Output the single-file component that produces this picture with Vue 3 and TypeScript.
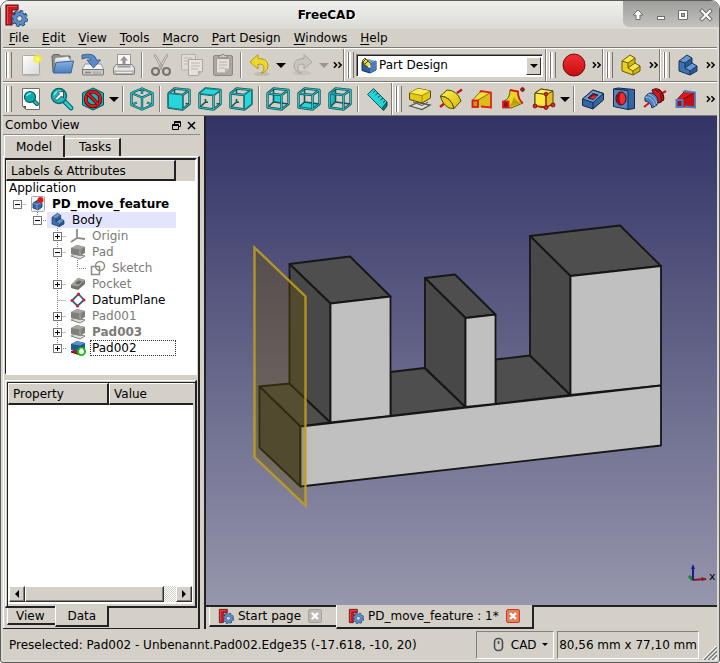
<script setup lang="ts">
import { ref } from 'vue'

interface Tool {
  icon?: string
  label?: string
  menu?: boolean
  disabled?: boolean
  sep?: boolean
}
interface TreeRow {
  label: string
  icon: string
  cells: string[]
  tone?: string
  expander?: string
}

const menus = ['File', 'Edit', 'View', 'Tools', 'Macro', 'Part Design', 'Windows', 'Help']
const windowButtons = ['shade', 'minimize', 'maximize', 'close']

const fileTools: Tool[] = [
  { icon: 'new', label: 'New' },
  { icon: 'open', label: 'Open' },
  { icon: 'save', label: 'Save' },
  { icon: 'print', label: 'Print' },
  { sep: true },
  { icon: 'cut', label: 'Cut', disabled: true },
  { icon: 'copy', label: 'Copy', disabled: true },
  { icon: 'paste', label: 'Paste', disabled: true },
  { sep: true },
  { icon: 'undo', label: 'Undo', menu: true },
  { icon: 'redo', label: 'Redo', menu: true, disabled: true },
]

const sideGroups: Tool[] = [
  { icon: 'record', label: 'Record macro' },
  { icon: 'part', label: 'Create part' },
  { icon: 'body', label: 'Create body' },
]

const viewTools: Tool[] = [
  { icon: 'fit', label: 'Fit all' },
  { icon: 'fitsel', label: 'Fit selection' },
  { icon: 'style', label: 'Draw style', menu: true },
  { sep: true },
  { icon: 'axo', label: 'Axonometric' },
  { sep: true },
  { icon: 'front', label: 'Front' },
  { icon: 'top', label: 'Top' },
  { icon: 'right', label: 'Right' },
  { sep: true },
  { icon: 'rear', label: 'Rear' },
  { icon: 'bottom', label: 'Bottom' },
  { icon: 'left', label: 'Left' },
  { sep: true },
  { icon: 'measure', label: 'Measure distance' },
]

const featureTools: Tool[] = [
  { icon: 'pad', label: 'Pad' },
  { icon: 'revolve', label: 'Revolution' },
  { icon: 'loft', label: 'Additive loft' },
  { icon: 'pipe', label: 'Additive pipe' },
  { icon: 'box', label: 'Additive box', menu: true },
  { sep: true },
  { icon: 'pocket', label: 'Pocket' },
  { icon: 'hole', label: 'Hole' },
  { icon: 'groove', label: 'Groove' },
  { icon: 'subloft', label: 'Subtractive loft' },
]

const tree: TreeRow[] = [
  { label: 'PD_move_feature', icon: 'doc', cells: ['root'], expander: '-', tone: 'strong' },
  { label: 'Body', icon: 'body', cells: ['none', 'last'], expander: '-', tone: 'marked' },
  { label: 'Origin', icon: 'origin', cells: ['none', 'none', 'mid'], expander: '+', tone: 'dim' },
  { label: 'Pad', icon: 'padgrey', cells: ['none', 'none', 'mid'], expander: '-', tone: 'dim' },
  { label: 'Sketch', icon: 'sketch', cells: ['none', 'none', 'pass', 'last'], tone: 'dim' },
  { label: 'Pocket', icon: 'pocketgrey', cells: ['none', 'none', 'mid'], expander: '+', tone: 'dim' },
  { label: 'DatumPlane', icon: 'datum', cells: ['none', 'none', 'mid'] },
  { label: 'Pad001', icon: 'padgrey', cells: ['none', 'none', 'mid'], expander: '+', tone: 'dim' },
  { label: 'Pad003', icon: 'padgrey', cells: ['none', 'none', 'mid'], expander: '+', tone: 'dim strong' },
  { label: 'Pad002', icon: 'padtip', cells: ['none', 'none', 'last'], expander: '+', tone: 'focused' },
]

const branch: Record<string, string> = {
  none: '',
  root: 'M10.5 8.5H19',
  last: 'M10.5 0V8.5H19',
  mid: 'M10.5 0V16M10.5 8.5H19',
  pass: 'M10.5 0V16',
}

const workbench = ref('Part Design')
const comboTab = ref('Model')
const propertyTab = ref('Data')
</script>

<template>
  <svg class="defs" aria-hidden="true">
    <defs>
      <linearGradient id="paper" x1="0" y1="0" x2="1" y2="1">
        <stop offset="0" stop-color="#ffffff" /><stop offset="1" stop-color="#d8d8dc" />
      </linearGradient>
      <linearGradient id="bluefold" x1="0" y1="0" x2="0" y2="1">
        <stop offset="0" stop-color="#8ab0de" /><stop offset="1" stop-color="#4a7fc0" />
      </linearGradient>
      <linearGradient id="gold" x1="0" y1="0" x2="1" y2="1">
        <stop offset="0" stop-color="#fdf25a" /><stop offset="1" stop-color="#d9b800" />
      </linearGradient>
      <linearGradient id="cyan" x1="0" y1="0" x2="1" y2="1">
        <stop offset="0" stop-color="#34e2e2" /><stop offset="1" stop-color="#06989a" />
      </linearGradient>
      <linearGradient id="redg" x1="0" y1="0" x2="0" y2="1">
        <stop offset="0" stop-color="#f03035" /><stop offset="1" stop-color="#c80c10" />
      </linearGradient>
      <radialGradient id="glow">
        <stop offset="0" stop-color="#ffffc0" /><stop offset="0.45" stop-color="#f8ee30" /><stop offset="1" stop-color="#f8ee30" stop-opacity="0" />
      </radialGradient>
    </defs>

    <symbol id="logo" viewBox="0 0 24 24">
      <path d="M2 2H14V7H8V10H12V14H8V22H2Z" fill="#cf1a1e" stroke="#641014" stroke-width="1.2" />
      <path d="M3 3H13V4H4V21H3Z" fill="#f4484a" />
      <circle cx="15.500" cy="15.500" r="6.800" fill="none" stroke="#25405f" stroke-width="3.400" stroke-dasharray="3.200 2.140" />
      <circle cx="15.500" cy="15.500" r="4.500" fill="none" stroke="#25405f" stroke-width="5" />
      <circle cx="15.500" cy="15.500" r="6.500" fill="none" stroke="#5c8cc8" stroke-width="2.400" stroke-dasharray="2.400 2.705" stroke-dashoffset="-.3" />
      <circle cx="15.500" cy="15.500" r="4.500" fill="none" stroke="#5c8cc8" stroke-width="3.200" />
      <circle cx="15.500" cy="15.500" r="2.300" fill="#dcdad5" />
    </symbol>

    <symbol id="new" viewBox="0 0 24 24">
      <ellipse cx="12" cy="22" rx="10" ry="1.500" fill="#a8a49c" opacity=".6" />
      <rect x="3.500" y="2.500" width="17" height="19" rx="1" fill="url(#paper)" stroke="#aaa" />
      <circle cx="18.500" cy="6" r="5.500" fill="url(#glow)" />
    </symbol>
    <symbol id="open" viewBox="0 0 24 24">
      <path d="M2 3L4 1.500H9L10 3H20V19H3Z" fill="#8d8f8b" stroke="#5f615d" />
      <path d="M5 5L18 3.500L21 8H5Z" fill="#f4f4f4" stroke="#999" stroke-width=".7" />
      <path d="M5 6.500H20V10H5Z" fill="#dcdcdc" />
      <path d="M6 9.500L23.500 8L21 20H3.500Z" fill="url(#bluefold)" stroke="#3565a4" />
    </symbol>
    <symbol id="save" viewBox="0 0 24 24">
      <path d="M4 11H20L23 17H1Z" fill="#f2f2f0" stroke="#888" stroke-width=".8" />
      <path d="M1.500 16.500H22.500V21Q22.500 22 21.500 22H2.500Q1.500 22 1.500 21Z" fill="#c9c9c7" stroke="#777" />
      <path d="M4 19.500H10" stroke="#888" stroke-width="1.500" />
      <path d="M13 18.500V21M15 18.500V21M17 18.500V21M19 18.500V21" stroke="#999" />
      <path d="M1 2Q14 -1 15.500 7H19.500L12.500 15L6 7H10Q9 3 1 6Z" fill="#5b8bc4" stroke="#2f5b94" stroke-width=".9" />
    </symbol>
    <symbol id="print" viewBox="0 0 24 24">
      <path d="M5.500 1.500H18.500V14H5.500Z" fill="#f6f6f6" stroke="#999" />
      <path d="M12 3L16 7.500H13.500V11H10.500V7.500H8Z" fill="#949494" />
      <path d="M4 11.500H20L22.500 15V20.500Q22.500 21.500 21.500 21.500H2.500Q1.500 21.500 1.500 20.500V15Z" fill="#e6e6e4" stroke="#808080" />
      <path d="M5.500 12.500H18.500V14.500H5.500Z" fill="#9a9a98" />
      <path d="M2 17.500H22V21H2Z" fill="#b4b4b2" /><path d="M4 19.500H20" stroke="#ececea" />
    </symbol>
    <symbol id="cut" viewBox="0 0 24 24">
      <path d="M5 2L6.500 1.500L15 16L13 17ZM19 2L17.500 1.500L9 16L11 17Z" fill="#ddd9d2" stroke="#9a968e" stroke-width=".9" />
      <circle cx="6.500" cy="18.500" r="3.500" fill="none" stroke="#77736d" stroke-width="2.200" />
      <circle cx="17.500" cy="18.500" r="3.500" fill="none" stroke="#77736d" stroke-width="2.200" />
    </symbol>
    <symbol id="copy" viewBox="0 0 24 24">
      <path d="M1.500 1.500H15.500V17H1.500Z" fill="#dfdbd4" stroke="#b6b2aa" />
      <path d="M4 5H12M4 8H12M4 11H8" stroke="#bcb8b0" />
      <path d="M8.500 6.500H22.500V18L18 22.500H8.500Z" fill="#e6e2db" stroke="#aaa69e" />
      <path d="M11 10H20M11 13H20M11 16H18" stroke="#bcb8b0" /><path d="M18 22V18H22Z" fill="#b4b0a8" />
    </symbol>
    <symbol id="paste" viewBox="0 0 24 24">
      <rect x="2.500" y="2.500" width="19" height="20" rx="1.500" fill="#aca89f" stroke="#8e8a82" />
      <path d="M5.500 5.500H18.500V16L15 20H5.500Z" fill="#e4e0d9" stroke="#a29e96" />
      <path d="M8 9H16M8 12H16M8 15H14" stroke="#b8b4ac" /><path d="M14 20V15.500H19Z" fill="#b8b4ac" />
      <path d="M8 5V2.500H10Q12 -.5 14 2.500H16V5Z" fill="#cbc7bf" stroke="#89857d" />
    </symbol>
    <symbol id="undo" viewBox="0 0 24 24">
      <ellipse cx="14" cy="21" rx="8" ry="2" fill="#aaa598" opacity=".5" />
      <path d="M10 1.500L2 9L10 16V11.500Q16 10 16 15Q16 18 13 20.500Q20 18.500 20 12.500Q20 5.500 10 5.500Z" fill="#edd62d" stroke="#b99a0c" />
    </symbol>
    <symbol id="redo" viewBox="0 0 24 24">
      <ellipse cx="11" cy="20" rx="9" ry="2.500" fill="#bdb9b1" opacity=".6" />
      <path d="M13 1.500L21 9L13 16V11.500Q7 10 6.500 15Q7 18 10 20.500Q3 18.500 3 12.500Q3 5.500 13 5.500Z" fill="#c8c5be" stroke="#aaa79f" />
    </symbol>
    <symbol id="record" viewBox="0 0 24 24">
      <circle cx="12" cy="12" r="11" fill="url(#redg)" stroke="#6c1012" />
    </symbol>

    <symbol id="part" viewBox="0 0 24 24">
      <path d="M3 8L9 10V15L14 18V22L3 18Z" fill="#e8d022" />
      <path d="M9 10L16 5V10L9 15ZM14 18L21 13V18L14 22Z" fill="#d3b90f" />
      <path d="M3 8L11 2L16 5L9 10ZM9 15L16 10L21 13L14 18Z" fill="#f9ea4c" />
      <path d="M3 8L11 2L16 5V10L21 13V18L14 22L3 18ZM3 8L9 10L16 5M9 10V15L14 18V22M9 15L16 10M14 18L21 13" fill="none" stroke="#685806" stroke-linejoin="round" />
    </symbol>
    <symbol id="body" viewBox="0 0 24 24">
      <path d="M3 8L9 10V15L14 18V22L3 18Z" fill="#3d72b4" />
      <path d="M9 10L16 5V10L9 15ZM14 18L21 13V18L14 22Z" fill="#2c5a98" />
      <path d="M3 8L11 2L16 5L9 10ZM9 15L16 10L21 13L14 18Z" fill="#6898d0" />
      <path d="M3 8L11 2L16 5V10L21 13V18L14 22L3 18ZM3 8L9 10L16 5M9 10V15L14 18V22M9 15L16 10M14 18L21 13" fill="none" stroke="#163257" stroke-linejoin="round" />
    </symbol>

    <symbol id="fit" viewBox="0 0 24 24">
      <path d="M3.500 1.500H20.500V22.500H7L3.500 19Z" fill="#fcfcfa" stroke="#6d6f6b" /><path d="M3.500 19H7V22.500Z" fill="#555" />
      <path d="M14 13L18 17" stroke="#0a5658" stroke-width="4" stroke-linecap="round" /><path d="M14 13L18 17" stroke="#18c5c8" stroke-width="2.200" stroke-linecap="round" />
      <circle cx="11" cy="10" r="5.500" fill="#10aaad" stroke="#0a5658" stroke-width="1.200" />
      <path d="M7.500 9Q9 6 12 6.500" stroke="#6ef0f0" stroke-width="1.500" fill="none" />
    </symbol>
    <symbol id="fitsel" viewBox="0 0 24 24">
      <path d="M14 14L21 21" stroke="#0a5658" stroke-width="4.600" stroke-linecap="round" /><path d="M14 14L21 21" stroke="#21d4d6" stroke-width="2.800" stroke-linecap="round" />
      <circle cx="9" cy="9" r="7.500" fill="#1cb8bb" stroke="#0a6669" stroke-width="1.400" />
      <path d="M4 8Q6 3.500 11 4" stroke="#6ef0f0" stroke-width="1.500" fill="none" />
      <path d="M13.500 4.500V11L11.500 9L7 13.500L5 11.500L9.500 7L7.500 5Z" fill="#fff" stroke="#103436" stroke-width=".8" />
    </symbol>
    <symbol id="style" viewBox="0 0 24 24">
      <path d="M12 1L22.500 6V18L12 23L1.500 18V6Z" fill="#12b4b7" stroke="#0c4f52" />
      <circle cx="12" cy="12" r="7.300" fill="none" stroke="#4a0508" stroke-width="3.800" /><circle cx="12" cy="12" r="7.300" fill="none" stroke="#d81a1e" stroke-width="2.400" />
      <path d="M7 7L17 17" stroke="#4a0508" stroke-width="3.800" /><path d="M6.500 6.500L17.500 17.500" stroke="#d81a1e" stroke-width="2.400" />
    </symbol>
    <symbol id="axo" viewBox="0 0 24 24">
      <g fill="none" stroke-linejoin="round">
        <path d="M12 1.500L22.500 6V18L12 22.500L1.500 18V6ZM1.500 6L12 10.500L22.500 6M12 10.500V22.500M12 2V7M2 17.500L7 15.500M22 17.500L17 15.500" stroke="#17555a" stroke-width="2.400" />
        <path d="M12 1.500L22.500 6V18L12 22.500L1.500 18V6ZM1.500 6L12 10.500L22.500 6M12 10.500V22.500M12 2V7M2 17.500L7 15.500M22 17.500L17 15.500" stroke="#22c4c8" />
      </g>
    </symbol>
    <symbol id="wire" viewBox="0 0 24 24">
      <g fill="none" stroke-linejoin="round">
        <path d="M1.500 6.500L15.500 8V22.500L1.500 20.500ZM1.500 6.500L7.500 1.500L22.500 3L15.500 8M22.500 3V17L15.500 22.500" stroke="#17555a" stroke-width="2.400" />
        <path d="M7.500 2V6M7.500 12V15L2 20M7.500 15L10 15.300M18.500 16.500L22 17" stroke="#17555a" stroke-width="1.600" />
        <path d="M1.500 6.500L15.500 8V22.500L1.500 20.500ZM1.500 6.500L7.500 1.500L22.500 3L15.500 8M22.500 3V17L15.500 22.500" stroke="#22c4c8" />
      </g>
    </symbol>
    <symbol id="wirefull" viewBox="0 0 24 24">
      <g fill="none" stroke-linejoin="round">
        <path d="M7.500 1.500V15L1.500 20.500M7.500 15L22.500 17" stroke="#17555a" stroke-width="1.600" />
        <path d="M1.500 6.500L15.500 8V22.500L1.500 20.500ZM1.500 6.500L7.500 1.500L22.500 3L15.500 8M22.500 3V17L15.500 22.500" stroke="#17555a" stroke-width="2.400" />
        <path d="M1.500 6.500L15.500 8V22.500L1.500 20.500ZM1.500 6.500L7.500 1.500L22.500 3L15.500 8M22.500 3V17L15.500 22.500" stroke="#22c4c8" />
      </g>
    </symbol>
    <symbol id="front" viewBox="0 0 24 24">
      <use href="#wire" /><path d="M1.500 6.500L15.500 8V22.500L1.500 20.500Z" fill="#27d6da" stroke="#128084" />
    </symbol>
    <symbol id="top" viewBox="0 0 24 24">
      <use href="#wire" /><path d="M1.500 6.500L7.500 1.500L22.500 3L15.500 8Z" fill="#27d6da" stroke="#128084" />
    </symbol>
    <symbol id="right" viewBox="0 0 24 24">
      <use href="#wire" /><path d="M15.500 8L22.500 3V17L15.500 22.500Z" fill="#27d6da" stroke="#128084" />
    </symbol>
    <symbol id="rear" viewBox="0 0 24 24">
      <path d="M7.500 2L22.500 3V17L7.500 15Z" fill="#27cdd1" /><path d="M2 7L7.500 2H22L15.500 8Z" fill="#d4d0c8" /><path d="M16 8L22 4V17L16 22Z" fill="#d4d0c8" /><use href="#wirefull" />
    </symbol>
    <symbol id="bottom" viewBox="0 0 24 24">
      <path d="M7.500 15L22.500 17L15.500 22.500L1.500 20.500Z" fill="#27d6da" /><use href="#wirefull" />
    </symbol>
    <symbol id="left" viewBox="0 0 24 24">
      <path d="M1.500 6.500L7.500 1.500V15L1.500 20.500Z" fill="url(#cyan)" /><use href="#wirefull" />
    </symbol>
    <symbol id="measure" viewBox="0 0 24 24">
      <path d="M16.500 21.500L22 15V19L18.500 23.500Z" fill="#0b7b7e" stroke="#0c4549" />
      <path d="M2.500 7.500L8.500 1.500L22 15L16.500 21.500Z" fill="#25d2d5" stroke="#17555a" />
      <path d="M8 5.500L10.500 3.500M10.500 8L13 6M13 10.500L15.500 8.500M15.500 13L18 11M18 15.500L20.500 13.500" stroke="#0c4549" />
    </symbol>

    <symbol id="pad" viewBox="0 0 24 24">
      <path d="M2 19L10 15.500L22 18L14 22.500Z" fill="#ddd" stroke="#55574f" stroke-width="1.300" />
      <path d="M5 15L14 18.500L20 15" fill="none" stroke="#55574f" />
      <path d="M1.500 6L10 1.500L22.500 4V11L14 16L1.500 12.500Z" fill="#e3c81a" stroke="#554700" />
      <path d="M1.500 6L10 1.500L22.500 4L14 8.500Z" fill="#fbec52" /><path d="M1.500 6L14 8.500L22.500 4M14 8.500V16" fill="none" stroke="#8a7604" stroke-width=".8" />
    </symbol>
    <symbol id="revolve" viewBox="0 0 24 24">
      <path d="M1 20L6 16M18 6L23 2.500" stroke="#c81519" stroke-width="2.400" />
      <path d="M1.500 9L8 3Q18 3 22 14L15 21.500Q12 10 1.500 9Z" fill="url(#gold)" stroke="#554700" />
      <path d="M1.500 9Q12 10 15 21.500L10 21Q3 17 1.500 9Z" fill="#e6cb1c" stroke="#554700" />
    </symbol>
    <symbol id="loft" viewBox="0 0 24 24">
      <path d="M2.500 13L11 4L21 5.500V20.500L3 20.500Z" fill="#f3df30" />
      <path d="M8 13L21 6V20L8 20Z" fill="#d9be18" />
      <path d="M10 5L11 4L21 5.500V20.500L11 19.500" fill="none" stroke="#e02024" stroke-width="1.800" />
      <path d="M2.500 13L11 4M8 13L20 6" stroke="#6c4b06" stroke-width=".8" />
      <rect x="2.500" y="13.500" width="5.500" height="6.500" fill="#c79c14" stroke="#d41a1e" stroke-width="1.800" />
    </symbol>
    <symbol id="pipe" viewBox="0 0 24 24">
      <path d="M9 3L17 4.500Q17 13 22 16L10 21L3 19V14Q9 12 9 3Z" fill="#ebd320" stroke="#6c5a04" />
      <path d="M13 10Q11 16 8 20L21 16Q16 15 13 10Z" fill="#bd9f0c" />
      <path d="M9 3L17 4.500Q17 13 22 16" fill="none" stroke="#d41a1e" stroke-width="1.800" />
      <rect x="2" y="14.500" width="5.500" height="6" fill="#8f1012" stroke="#d41a1e" stroke-width="1.800" />
      <circle cx="21.500" cy="2.500" r="1.800" fill="#d41a1e" stroke="#520a0a" />
    </symbol>
    <symbol id="box" viewBox="0 0 24 24">
      <path d="M3 6L9 2L21 4V17L14 21L3 19Z" fill="#dcc118" stroke="#554700" />
      <path d="M3 6L9 2L21 4L14 7.500Z" fill="#fbf060" stroke="#554700" /><path d="M3 6L14 7.500V21L3 19Z" fill="#f8ea40" stroke="#554700" />
      <path d="M14 8V20L3 19M14 20L21 17" stroke="#c4161a" stroke-width="1.300" fill="none" />
      <g fill="#e02428" stroke="#640a0c" stroke-width=".8"><circle cx="14" cy="7" r="1.800" /><circle cx="14" cy="20.500" r="2" /><circle cx="3" cy="19" r="2" /><circle cx="21" cy="18" r="2" /></g>
    </symbol>
    <symbol id="pocket" viewBox="0 0 24 24">
      <path d="M1.500 12L12 3L22.500 6.500V13L12 22L1.500 18.500Z" fill="#3565a4" stroke="#14294a" />
      <path d="M1.500 12L12 3L22.500 6.500L12 15.500Z" fill="#6d9bd0" stroke="#14294a" /><path d="M12 15.500V22" stroke="#14294a" />
      <path d="M7 11L12 6.500L17 8L12 12.500Z" fill="#8b0a0c" stroke="#14294a" /><path d="M9 11L12.500 8.500L16 9L12 12Z" fill="#ef2a2e" />
    </symbol>
    <symbol id="hole" viewBox="0 0 24 24">
      <path d="M1.500 2L6 1L22.500 2.500V21.500L16 22.500Z" fill="#3465a4" stroke="#14294a" />
      <path d="M1.500 2L16 3.500V22.500L1.500 19.500Z" fill="#5285c2" stroke="#14294a" />
      <ellipse cx="9" cy="11.500" rx="5" ry="6.500" fill="#f02c30" stroke="#3d0608" /><path d="M9 5.500Q4 7 5 13Q6 17 9 17.500Q6 11 9 5.500Z" fill="#9a0a0d" />
    </symbol>
    <symbol id="groove" viewBox="0 0 24 24">
      <path d="M1 20L6 16M18 7L23 4" stroke="#d8181c" stroke-width="2.200" />
      <path d="M9 3Q14 0 18 4L21 12Q18 17 14 16Z" fill="#d3171b" stroke="#510608" />
      <path d="M12 3Q20 6 18 15M15 2Q23 7 20 14" fill="none" stroke="#510608" />
      <path d="M2 10Q6 4 11 7Q17 11 14 18L9 21Q8 15 2 14Z" fill="#4f80bd" stroke="#14294a" />
      <path d="M2 10Q10 10 12 19M5 7Q12 9 14 17" fill="none" stroke="#9fc0e6" />
    </symbol>
    <symbol id="subloft" viewBox="0 0 24 24">
      <path d="M2.500 13L11 4L21 5.500V20.500L3 20.500Z" fill="#e0181c" />
      <path d="M8 13L21 6V20L8 20Z" fill="#c41014" />
      <path d="M9 5.500L11 4L21 5.500V20.500L11 19.500" fill="none" stroke="#4d7ebc" stroke-width="1.800" />
      <path d="M2.500 13L10 5M8 13L20 6" stroke="#51060a" stroke-width=".8" />
      <rect x="2.500" y="13" width="6" height="7" fill="#8c1430" stroke="#4d7ebc" stroke-width="2" />
    </symbol>

    <symbol id="doc" viewBox="0 0 16 16">
      <rect x="1.500" y=".5" width="13" height="15" rx="1" fill="#f4f4f2" stroke="#aaa" />
      <path d="M3 7L8 4L12 7V11L8 14L3 12Z" fill="#3566a6" stroke="#163257" stroke-width=".8" /><path d="M3 7L7 8.500L12 6.500M7 8.500V14" stroke="#86abd8" stroke-width=".8" fill="none" />
      <circle cx="10.500" cy="4" r="3" fill="#e5181d" />
    </symbol>
    <symbol id="origin" viewBox="0 0 16 16">
      <path d="M7 1V10L15 11M7 10L1 14" fill="none" stroke="#8c8c86" stroke-width="1.800" />
    </symbol>
    <symbol id="padgrey" viewBox="0 0 16 16">
      <path d="M1 12L5 10L15 12L10 15Z" fill="#ddd" stroke="#83837d" /><path d="M1 4L7 1L15 3V9L10 12L1 10Z" fill="#80807a" />
      <path d="M1 4L7 1L15 3L10 5.500Z" fill="#a6a6a0" /><path d="M10 5.500V11" stroke="#b2b2ad" />
    </symbol>
    <symbol id="sketch" viewBox="0 0 16 16">
      <rect x="1.500" y="6.500" width="8" height="8" fill="none" stroke="#8c8c86" stroke-width="1.500" /><circle cx="10" cy="6" r="4.500" fill="none" stroke="#8c8c86" stroke-width="1.500" />
    </symbol>
    <symbol id="pocketgrey" viewBox="0 0 16 16">
      <path d="M1 9L8 2L15 4V8L8 14L1 12Z" fill="#73736d" /><path d="M1 9L8 2L15 4L8 10.500Z" fill="#a2a29c" /><path d="M5 7.500L8.500 4.500L12 5.500L8.500 8.500Z" fill="#65655f" />
    </symbol>
    <symbol id="datum" viewBox="0 0 16 16">
      <path d="M8.500 2L14 8L7.500 14L2 8.500Z" fill="#fff" stroke="#2d5b98" stroke-width="1.800" />
      <g fill="#e0181c"><circle cx="8.500" cy="2" r="1.500" /><circle cx="14" cy="8" r="1.500" /><circle cx="7.500" cy="14" r="1.500" /><circle cx="2" cy="8.500" r="1.500" /></g>
    </symbol>
    <symbol id="padtip" viewBox="0 0 16 16">
      <path d="M1 12L5 10L15 12L10 15Z" fill="#c21318" stroke="#701014" /><path d="M1 4L7 1L15 3V9L10 12L1 10Z" fill="#28568f" />
      <path d="M1 4L7 1L15 3L10 5.500Z" fill="#5b8ecb" />
      <circle cx="11.500" cy="11.500" r="3.500" fill="#fff" stroke="#12c512" stroke-width="2" /><path d="M10.500 8.500H12.500V11.500H14L11.500 14.500L9 11.500H10.500Z" fill="#fff" />
    </symbol>
    <symbol id="bench" viewBox="0 0 16 16">
      <path d="M1 4L9 5.500L15 3V12L9 15L1 12.500Z" fill="#2c5c9c" stroke="#163257" /><path d="M9 5.500L15 3V12L9 15Z" fill="#4b7dbd" />
      <path d="M1 4L7 1L15 3L9 5.500Z" fill="#6d9bd0" /><path d="M1 3L4 0L9.500 5.500V10L5 8Z" fill="#f0dc25" stroke="#40380a" stroke-width=".8" /><path d="M2 4L5 1M4 6L7 3" stroke="#40380a" /><path d="M6.500 9L9.500 6.500V10Z" fill="#fff" />
    </symbol>
    <symbol id="shade" viewBox="0 0 16 16"><path d="M8 3L13 8H10V12.500H6V8H3Z" fill="#fff" stroke="#6e6e6c" /></symbol>
    <symbol id="minimize" viewBox="0 0 16 16"><rect x="4.500" y="9.500" width="7" height="3" fill="#fff" stroke="#6e6e6c" /></symbol>
    <symbol id="maximize" viewBox="0 0 16 16"><path d="M3.500 3.500H12.500V12.500H3.500Z" fill="#fff" stroke="#6e6e6c" /><rect x="6.500" y="6.500" width="3" height="3" fill="#aaa" stroke="#6e6e6c" /></symbol>
    <symbol id="close" viewBox="0 0 16 16"><path d="M4 4L12 12M12 4L4 12" stroke="#6e6e6c" stroke-width="4" stroke-linecap="square" /><path d="M4 4L12 12M12 4L4 12" stroke="#fff" stroke-width="2" stroke-linecap="square" /></symbol>
    <symbol id="more" viewBox="0 0 10 8"><path d="M1 1L4 4L1 7M6 1L9 4L6 7" fill="none" stroke="#000" stroke-width="1.700" /></symbol>
  </svg>

  <div class="window">
    <header class="titlebar">
      <svg class="app-icon"><use href="#logo" /></svg>
      <h1>FreeCAD</h1>
      <div class="window-buttons">
        <button v-for="b in windowButtons" :key="b" :aria-label="b"><svg class="i16"><use :href="'#' + b" /></svg></button>
      </div>
    </header>

    <div class="frame">
      <nav class="menubar">
        <button v-for="m in menus" :key="m"><u>{{ m[0] }}</u>{{ m.slice(1) }}</button>
      </nav>

      <div class="toolrow">
        <div class="group">
          <i class="handle"></i>
          <template v-for="(t, n) in fileTools" :key="n">
            <i v-if="t.sep" class="sep"></i>
            <template v-else>
              <button class="tool" :aria-label="t.label" :disabled="t.disabled"><svg class="i24"><use :href="'#' + t.icon" /></svg></button>
              <button v-if="t.menu" class="drop" :aria-label="t.label + ' list'" :disabled="t.disabled"></button>
            </template>
          </template>
          <button class="more" aria-label="More file tools"><svg><use href="#more" /></svg></button>
        </div>
        <div class="group grow">
          <i class="handle"></i>
          <label class="combo">
            <svg class="i16"><use href="#bench" /></svg>
            <select v-model="workbench" aria-label="Workbench"><option>Part Design</option></select>
            <span class="combo-arrow"></span>
          </label>
        </div>
        <div v-for="g in sideGroups" :key="g.icon" class="group">
          <i class="handle"></i>
          <button class="tool" :aria-label="g.label"><svg class="i24"><use :href="'#' + g.icon" /></svg></button>
          <button class="more" :aria-label="g.label + ' more'"><svg><use href="#more" /></svg></button>
        </div>
      </div>

      <div class="toolrow">
        <div v-for="(tools, g) in [viewTools, featureTools]" :key="g" class="group" :class="{ grow: g === 1 }">
          <i class="handle"></i>
          <template v-for="(t, n) in tools" :key="n">
            <i v-if="t.sep" class="sep"></i>
            <template v-else>
              <button class="tool" :aria-label="t.label"><svg class="i24"><use :href="'#' + t.icon" /></svg></button>
              <button v-if="t.menu" class="drop" :aria-label="t.label + ' list'"></button>
            </template>
          </template>
          <button v-if="g === 1" class="more" aria-label="More features"><svg><use href="#more" /></svg></button>
        </div>
      </div>

      <main class="work">
        <aside class="dock">
          <div class="dock-title">
            <span>Combo View</span>
            <button aria-label="Float"><svg viewBox="0 0 9 9"><path d="M2.500 3V.5H8.500V5.500H6M2.500 1.500H8.500M.5 3.500H6.500V8.500H.5ZM.5 4.500H6.500" fill="none" stroke="#000" /></svg></button>
            <button aria-label="Close"><svg viewBox="0 0 9 9"><path d="M1 1L8 8M8 1L1 8" stroke="#000" stroke-width="1.500" /></svg></button>
          </div>
          <div class="tabs top">
            <button v-for="t in ['Model', 'Tasks']" :key="t" :class="{ on: comboTab === t }" @click="comboTab = t">{{ t }}</button>
          </div>
          <div class="pane">
            <section class="tree">
              <div class="tree-head">Labels &amp; Attributes</div>
              <div class="tree-root">Application</div>
              <ul>
                <li v-for="row in tree" :key="row.label" :class="row.tone">
                  <svg v-for="(c, i) in row.cells" :key="i" class="cell" viewBox="0 0 20 16">
                    <path :d="branch[c]" class="dots" />
                    <g v-if="row.expander && i === row.cells.length - 1">
                      <rect x="6.500" y="4.500" width="8" height="8" class="exp" />
                      <path :d="row.expander === '+' ? 'M8 8.500H13M10.500 6V11' : 'M8 8.500H13'" stroke="#000" />
                    </g>
                  </svg>
                  <span class="entry"><svg class="i16"><use :href="'#' + row.icon" /></svg><span class="name">{{ row.label }}</span></span>
                </li>
              </ul>
            </section>
            <section class="props">
              <div class="props-body">
                <table>
                  <thead><tr><th>Property</th><th>Value</th></tr></thead>
                </table>
                <div class="scroll">
                  <button aria-label="Scroll left"><svg viewBox="0 0 4 8"><path d="M4 0V8L0 4Z" /></svg></button>
                  <span class="thumb"></span>
                  <span class="track"></span>
                  <button aria-label="Scroll right"><svg viewBox="0 0 4 8"><path d="M0 0V8L4 4Z" /></svg></button>
                </div>
              </div>
              <div class="tabs bottom">
                <button v-for="t in ['View', 'Data']" :key="t" :class="{ on: propertyTab === t }" @click="propertyTab = t">{{ t }}</button>
              </div>
            </section>
          </div>
        </aside>

        <section class="mdi">
          <div class="viewport">
            <svg class="scene" viewBox="206 116 511 489" role="img" aria-label="3D view">
              <g stroke="#161616" stroke-width="1.800" stroke-linejoin="round">
                <g fill="#4e4e4e">
                  <path d="M259.500 386.500L289.500 383.500L330.500 422.500L300.500 426.500Z" />
                  <path d="M390.500 372L424.500 368L465.500 407L390.500 416Z" />
                  <path d="M495.500 359.500L530 355.500L570.500 395L495.500 404Z" />
                  <path d="M289.500 264L350 256.500L390.500 296.500L330.500 303.500Z" />
                  <path d="M425 278L455 274.500L495.500 314.500L465.500 318Z" />
                  <path d="M530 236L620 225.500L661 266L570.500 276Z" />
                </g>
                <g fill="#484848">
                  <path d="M289.500 264L330.500 303.500V422.500L289.500 383.500Z" />
                  <path d="M425 278L465.500 318V407L425 368Z" />
                  <path d="M530 236L570.500 276V395L530 355.500Z" />
                  <path d="M259.500 386.500L300.500 426.500V486.500L259.500 447.500Z" />
                </g>
                <g fill="#c0c0c0">
                  <path d="M330.500 303.500L390.500 296.500V416L330.500 422.500Z" />
                  <path d="M465.500 318L495.500 314.500V404L465.500 407Z" />
                  <path d="M570.500 276L661 266V385.500L570.500 395Z" />
                  <path d="M300.500 426.500L661 385.500V445.500L300.500 486.500Z" />
                </g>
              </g>
              <path d="M254.500 247.500L305.500 296.500V505.500L254.500 457Z" fill="#645000" fill-opacity=".35" stroke="#c4a01c" stroke-opacity=".85" stroke-width="2.400" />
              <path d="M689 576L693 580" stroke="#12882a" stroke-width="3" />
              <path d="M693 580L706 579" stroke="#8a1a20" stroke-width="2" /><path d="M701 577L707 579L702 581Z" fill="#8a1a20" />
              <path d="M693 580V566" stroke="#1c1c8c" stroke-width="2" /><path d="M691 569L693 564L695 569Z" fill="#1c1c8c" />
              <text x="709" y="580" class="axis">x</text>
            </svg>
          </div>
          <div class="doctabs">
            <div class="doctab"><svg class="i16"><use href="#logo" /></svg><a href="#start">Start page</a><button aria-label="Close tab"><svg viewBox="0 0 8 8"><path d="M1 1L7 7M7 1L1 7" /></svg></button></div>
            <div class="doctab on"><svg class="i16"><use href="#logo" /></svg><a href="#model">PD_move_feature : 1*</a><button aria-label="Close tab"><svg viewBox="0 0 8 8"><path d="M1 1L7 7M7 1L1 7" /></svg></button></div>
          </div>
        </section>
      </main>

      <footer class="status">
        <span class="message">Preselected: Pad002 - Unbenannt.Pad002.Edge35 (-17.618, -10, 20)</span>
        <button class="well nav"><svg viewBox="0 0 12 16"><rect x="1.500" y="1.500" width="8" height="12" rx="3.500" fill="none" stroke="#4c4e50" stroke-width="1.600" /><path d="M5.500 4V7" stroke="#4c4e50" stroke-width="1.600" /></svg>CAD<i></i></button>
        <span class="well">80,56 mm x 77,10 mm</span>
        <svg class="grip" viewBox="0 0 14 14"><path d="M0 14L14 0M4 14L14 4M8 14L14 8M12 14L14 12" stroke="#fff" stroke-width="2" /><path d="M1 14L14 1M5 14L14 5M9 14L14 9" stroke="#777" stroke-width="1.500" /></svg>
      </footer>
    </div>
  </div>
</template>

<style>
body { background: #fff; }
</style>

<style scoped>
.defs { position: absolute; width: 0; height: 0; }
.window {
  box-sizing: border-box; min-height: 100vh; display: flex; flex-direction: column;
  border: 1px solid #5c5c5a; border-radius: 9px 9px 3px 3px; overflow: hidden;
  background: #dcdad6; font: 12px/16px "DejaVu Sans", sans-serif; color: #000;
}
.window * { box-sizing: border-box; }
button { border: 0; padding: 0; margin: 0; background: none; font: inherit; color: inherit; }
svg { display: block; flex: none; }
.i24 { width: 24px; height: 24px; }
.i16 { width: 16px; height: 16px; }

.titlebar { display: flex; height: 28px; background: linear-gradient(#efefed, #dadad6); }
.app-icon { width: 24px; height: 24px; margin: 2px 2px 0 3px; }
h1 { flex: 1; margin: 0; text-align: center; font-size: 12px; line-height: 28px; text-shadow: 1px 1px #fff; }
.window-buttons {
  display: flex; align-items: center; justify-content: space-around; width: 96px; height: 26px; padding: 2px 2px 0 4px;
  background: linear-gradient(#9e9e9c, #c2c2be); border-radius: 0 0 0 6px;
}

.frame { flex: 1; display: flex; flex-direction: column; margin: 0 2px 2px; background: #d4d0c8; }
.menubar { display: flex; height: 19px; border-bottom: 1px solid #7c7a74; }
.menubar button { padding: 0 7px 0 6px; line-height: 17px; }
u { text-underline-offset: 2px; }

.toolrow { display: flex; height: 34px; border-bottom: 1px solid #7c7a74; border-top: 1px solid #fff; }
.group { display: flex; align-items: center; }
.group + .group { border-left: 1px solid #fff; box-shadow: -1px 0 #7c7a74; }
.group + .group .handle { margin-right: 2px; }
.grow { flex: 1; }
.handle { width: 6px; height: 26px; margin: 0 3px; border: solid #77756f; border-width: 0 1px; box-shadow: inset 2px 0 #fff, inset -2px 0 #d4d0c8, -1px 0 #fff; }
.sep { width: 2px; height: 26px; margin: 0 2px; border-left: 1px solid #808080; border-right: 1px solid #fff; }
.tool { width: 31px; display: flex; justify-content: center; }
.drop { width: 12px; height: 20px; display: flex; align-items: center; justify-content: center; }
.drop::before { content: ""; border: solid transparent; border-width: 5px 5px 0; border-top-color: #000; }
.drop:disabled::before { border-top-color: #9a968e; }
.more { width: 14px; display: flex; justify-content: center; margin-left: auto; }
.more svg { width: 9px; height: 8px; }
.combo { position: relative; flex: 1; display: flex; margin-right: 3px; height: 23px; border: 1px solid #808080; border-right-color: #fff; border-bottom-color: #fff; background: #fff; box-shadow: inset 1px 1px #222; }
.combo .i16 { position: absolute; left: 4px; top: 3px; }
select { appearance: none; width: 100%; border: 0; background: none; font: inherit; color: #000; padding: 0 20px 0 22px; outline: 0; }
.combo-arrow { position: absolute; right: 1px; top: 2px; bottom: 1px; width: 15px; display: flex; align-items: center; justify-content: center; background: #d4d0c8; border: 1px solid #fff; border-right-color: #333; border-bottom-color: #333; pointer-events: none; }
.combo-arrow::before { content: ""; border: solid transparent; border-width: 4px 4px 0; border-top-color: #000; }

.work { flex: 1; display: flex; }
.dock { width: 197px; display: flex; flex-direction: column; border-bottom: 1px solid #222; }
.dock-title { display: flex; align-items: center; height: 19px; padding: 0 4px 0 2px; gap: 6px; border-bottom: 1px solid #8c8a84; }
.dock-title span { flex: 1; }
.dock-title svg { width: 9px; height: 9px; }
.tabs { display: flex; position: relative; }
.tabs button { text-align: center; }
.tabs.top { align-items: flex-end; height: 21px; margin-left: 1px; z-index: 1; }
.tabs.top button { height: 18px; border: 1px solid #fff; border-width: 1px 0 0; border-right: 2px solid #222; padding: 0 8px 1px 14px; }
.tabs.top .on { height: 22px; padding: 0 11px; background: #d4d0c8; margin-bottom: -1px; border-left: 1px solid #fff; }
.pane { flex: 1; display: flex; flex-direction: column; gap: 5px; border: 1px solid #fff; border-right: 2px solid #222; border-bottom: 0; padding: 1px 1px 0; }
.tree { height: 217px; border: 2px solid #fff; border-top-color: #222; border-left: 1px solid #222; background: #fff; }
.tree-head { width: 170px; height: 21px; padding: 2px 4px; background: #d4d0c8; border: 1px solid #eee; border-right: 2px solid #222; border-bottom: 2px solid #222; box-shadow: 19px 0 #d4d0c8; }
.tree-root { padding-left: 3px; line-height: 15px; }
ul { list-style: none; margin: 0; padding: 0 0 0 1px; width: 170px; }
li { display: flex; height: 16px; }
.cell { width: 20px; height: 16px; }
.dots { fill: none; stroke: #808080; stroke-dasharray: 1 1; }
.exp { fill: #fff; stroke: #777; }
.entry { flex: 1; display: flex; padding-left: 3px; }
.name { flex: 1; margin-left: 4px; padding-left: 1px; line-height: 14px; white-space: nowrap; border: 1px solid transparent; }
.dim { color: #7b7b78; }
.strong { font-weight: bold; }
.marked .entry { background: #e4e4fc; }
.focused .name { border: 1px dotted #333; }

.props { flex: 1; display: flex; flex-direction: column; }
.props-body { flex: 1; display: flex; flex-direction: column; border: 1px solid #fff; border-right: 2px solid #222; border-bottom: 2px solid #222; background: #fff; box-shadow: inset 1px 1px #d4d0c8, inset 2px 2px #222, inset -2px -2px #d4d0c8; padding: 2px 2px 4px; }
table { width: 100%; flex: 1; display: flex; flex-direction: column; }
thead { display: block; }
tr { display: flex; }
th { flex: 1; height: 22px; padding: 2px 4px; text-align: left; font-weight: normal; background: #d4d0c8; border: 1px solid #fff; border-width: 1px 0 0 1px; border-bottom: 2px solid #222; }
th:first-child { flex: none; width: 101px; border-right: 2px solid #222; }
.scroll { display: flex; height: 16px; margin: 0 1px; }
.scroll button { width: 16px; display: flex; align-items: center; justify-content: center; }
.scroll button, .thumb { background: #d4d0c8; border: 1px solid #fff; border-right-color: #333; border-bottom-color: #333; box-shadow: inset -1px -1px #808080; }
.scroll svg { width: 4px; height: 8px; }
.thumb { flex: 11; }
.track { flex: 1; background: repeating-conic-gradient(#fff 0 25%, #d4d0c8 0 50%) 0 0 / 2px 2px; }
.tabs.bottom { height: 20px; margin-left: 2px; align-items: flex-start; }
.tabs.bottom button { height: 17px; padding: 0 11px 1px 8px; border-left: 1px solid #fff; border-bottom: 2px solid #222; }
.tabs.bottom .on { height: 21px; padding: 0 11px; margin-top: -2px; border-right: 2px solid #222; background: #d4d0c8; }

.mdi { flex: 1; min-width: 0; margin-left: 4px; border-left: 2px solid #222; display: flex; flex-direction: column; }
.viewport { flex: 1; display: flex; align-items: center; background: linear-gradient(#333366, #9696ac); }
.scene { width: 100%; height: auto; }
.axis { font-size: 11px; }
.doctabs { display: flex; height: 24px; padding-left: 3px; border-top: 2px solid #222; }
.doctab { display: flex; align-items: center; gap: 4px; height: 20px; padding: 0 14px 0 8px; border-left: 1px solid #fff; border-bottom: 2px solid #222; }
.doctab.on { height: 24px; margin-top: -2px; padding: 0 12px 0 11px; background: #d4d0c8; border-right: 2px solid #222; }
.doctab a { color: #000; text-decoration: none; white-space: nowrap; }
.doctab button { width: 14px; height: 14px; margin-left: 3px; display: flex; align-items: center; justify-content: center; border: 1px solid #a5a29b; border-radius: 2px; background: #bcb9b2; }
.doctab.on button { border-color: #d8342a; background: #e08058; }
.doctab button svg { width: 8px; height: 8px; fill: none; stroke: #fff; stroke-width: 2.4; }

.status { display: flex; align-items: center; height: 31px; gap: 3px; padding-left: 6px; }
.message { flex: 1; white-space: nowrap; }
.well { height: 28px; display: flex; align-items: center; justify-content: center; padding: 0 1px; border: 1px solid #808080; border-right-color: #fff; border-bottom-color: #fff; white-space: nowrap; }
.nav { width: 78px; padding: 0 5px 0 16px; justify-content: space-between; }
.nav svg { width: 12px; height: 16px; }
.nav i { border: solid transparent; border-width: 3px 3px 0; border-top-color: #000; }
.grip { width: 14px; height: 14px; align-self: flex-end; margin-left: 1px; }
</style>
